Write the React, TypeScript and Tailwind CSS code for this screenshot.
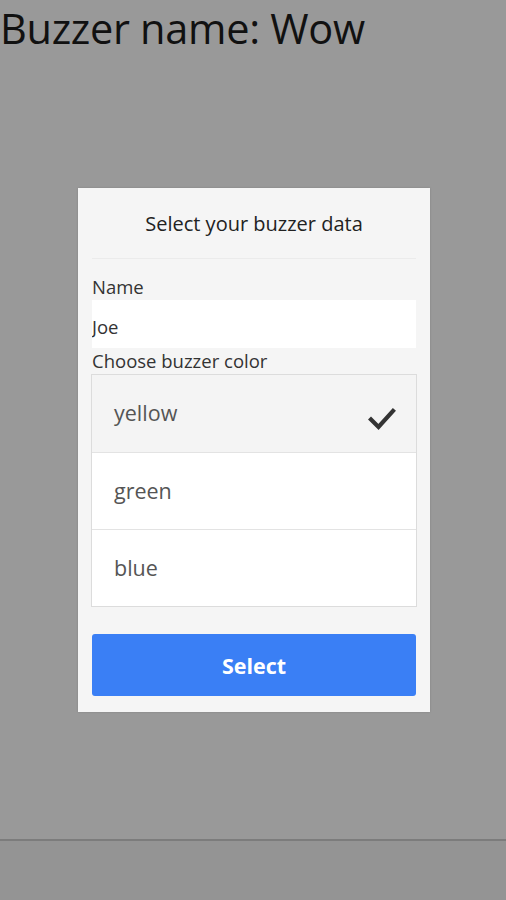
import { useState } from "react";

const colors = ["yellow", "green", "blue"];

function Check() {
  return (
    <svg width="28" height="24" viewBox="0 0 28 24" fill="none">
      <path d="M3 12.5 L10.5 20 L25 4" stroke="#333" strokeWidth="4.2" strokeLinecap="square" />
    </svg>
  );
}

export default function App() {
  const [selected, setSelected] = useState("yellow");

  return (
    <div className="relative h-[900px] flex flex-col bg-[#999999] font-['Open_Sans',sans-serif] text-black overflow-hidden">
      {/* Title */}
      <h1 className="text-[41.5px] leading-[56px] tracking-[-0.3px] text-[#111]">Buzzer name: Wow</h1>

      <div className="flex-1" />

      {/* Footer bar */}
      <div className="h-[61px] border-t-2 border-[#7c7c7c] bg-[#949494]" />

      {/* Modal */}
      <div className="absolute inset-0 flex items-center justify-center pl-[2px]">
        <div className="w-[352px] bg-[#f5f5f5] shadow-[0_0_2px_rgba(0,0,0,0.15)]">
          <div className="h-[71px] flex items-center justify-center border-b border-[#ebebeb] mx-[14px]">
            <span className="text-[20px] text-[#222] pt-[1px]">Select your buzzer data</span>
          </div>

          <div className="px-[14px] pt-[15px] pb-[16px]">
            <label className="block text-[18.5px] leading-[26px] text-[#333]">Name</label>
            <input
              type="text"
              defaultValue="Joe"
              className="block w-full h-[48px] bg-white outline-none text-[18.5px] text-[#333] pt-[4px]"
            />
            <div className="text-[18.5px] leading-[27px] text-[#333] -mt-[1px]">Choose buzzer color</div>

            <div className="-mx-px border border-[#dcdcdc] bg-white">
              {colors.map((c, i) => (
                <div
                  key={c}
                  onClick={() => setSelected(c)}
                  className={`h-[77px] flex items-center justify-between pl-[22px] pr-[20px] cursor-pointer ${
                    i > 0 ? "border-t border-[#e3e3e3]" : ""
                  } ${selected === c ? "bg-[#f4f4f4]" : "bg-white"}`}
                >
                  <span className="text-[21.5px] text-[#555]">{c}</span>
                  {selected === c && (
                    <span className="mt-[10px]">
                      <Check />
                    </span>
                  )}
                </div>
              ))}
            </div>

            <button className="mt-[27px] w-full h-[62px] rounded-[3px] bg-[#3a7ff5] text-white text-[21.5px] font-bold pt-[3px]">
              Select
            </button>
          </div>
        </div>
      </div>
    </div>
  );
}
